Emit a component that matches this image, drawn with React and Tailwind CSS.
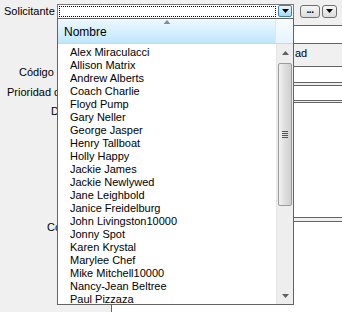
import React from "react";

const names = [
  "Alex Miraculacci",
  "Allison Matrix",
  "Andrew Alberts",
  "Coach Charlie",
  "Floyd Pump",
  "Gary Neller",
  "George Jasper",
  "Henry Tallboat",
  "Holly Happy",
  "Jackie James",
  "Jackie Newlywed",
  "Jane Leighbold",
  "Janice Freidelburg",
  "John Livingston10000",
  "Jonny Spot",
  "Karen Krystal",
  "Marylee Chef",
  "Mike Mitchell10000",
  "Nancy-Jean Beltree",
  "Paul Pizzaza",
];

function Tri({ up = false, color = "#000" }) {
  return (
    <svg width="7" height="4" viewBox="0 0 7 4">
      {up ? (
        <path d="M0 4 L3.5 0 L7 4 Z" fill={color} />
      ) : (
        <path d="M0 0 L7 0 L3.5 4 Z" fill={color} />
      )}
    </svg>
  );
}

export default function App() {
  return (
    <div
      className="relative w-[342px] h-[312px] overflow-hidden bg-[#f0f0f0] text-[11px] leading-[13px] text-black"
      style={{ fontFamily: '"Liberation Sans", Arial, sans-serif' }}
    >
      {/* Top row */}
      <div className="flex items-center h-[21px] pt-[1px]">
        <span className="pl-[4px] w-[57px]">Solicitante</span>
        <div className="flex items-center w-[237px] h-[15px] border border-[#7a7a7a] bg-white p-[1px]">
          <div className="flex-1 h-full border border-dotted border-black" />
          <div className="ml-[2px] w-[14px] h-[12px] flex items-center justify-center border border-[#3c7fb1] rounded-[2px] bg-gradient-to-b from-[#eaf6fd] to-[#a7d9f5]">
            <Tri />
          </div>
        </div>
        <div className="ml-[6px] w-[20px] h-[13px] flex items-center justify-center border border-[#707070] rounded-[3px] bg-gradient-to-b from-[#f6f6f6] to-[#dcdcdc] text-[10px] leading-[6px] font-bold tracking-[-0.5px]">
          <span className="-mt-[3px]">...</span>
        </div>
        <div className="ml-[2px] w-[15px] h-[13px] flex items-center justify-center border border-[#707070] rounded-[3px] bg-gradient-to-b from-[#f6f6f6] to-[#dcdcdc]">
          <Tri />
        </div>
      </div>

      {/* Background form */}
      <div className="flex">
        <div className="w-[111px] shrink-0">
          <div className="w-[57px] overflow-hidden whitespace-nowrap">
            <div className="h-[45px]" />
            <div className="h-[20px] pl-[19px]">Código d</div>
            <div className="h-[19px] pl-[7px]">Prioridad d</div>
            <div className="h-[116px] pl-[51px]">D</div>
            <div className="h-[40px] pl-[47px]">Co</div>
          </div>
        </div>
        <div className="flex-1 flex flex-col">
          <div className="h-[4px]" />
          <div className="h-[18px] bg-white border-t border-[#646464]" />
          <div className="h-[23px] border-t border-[#646464] pl-[184px] pt-[3px]">ad</div>
          <div className="h-[16px] border-t border-[#646464] bg-white" />
          <div className="h-[3px] border-t border-[#646464]" />
          <div className="h-[15px] border-t border-[#646464] bg-white" />
          <div className="h-[2px] border-t border-[#646464]" />
          <div className="h-[115px] border-t border-[#646464] bg-white" />
          <div className="h-[4px] border-t border-[#646464]" />
          <div className="h-[100px] border-t border-l border-[#646464] bg-white" />
        </div>
      </div>

      {/* Dropdown popup */}
      <div className="absolute left-[57px] top-[18px] w-[237px] h-[287px] border border-[#646464] bg-white flex flex-col">
        {/* Header */}
        <div className="flex h-[25px] border-b border-[#d5d5d5]">
          <div className="relative flex-1 flex items-center pl-[6px] pt-[3px] bg-gradient-to-b from-[#eef9ff] to-[#bfe6fb]">
            <span className="absolute left-1/2 top-[1px] -translate-x-1/2">
              <Tri up color="#8a8a8a" />
            </span>
            <span className="text-[12px]">Nombre</span>
          </div>
          <div className="w-[18px] border-l border-[#d5e9f5] bg-gradient-to-b from-[#f7fcff] to-[#e6f4fc]" />
        </div>
        {/* Body */}
        <div className="flex flex-1 min-h-0">
          <div className="flex-1 pt-[2px] pl-[12px] overflow-hidden">
            {names.map((n) => (
              <div key={n} className="h-[13px] whitespace-nowrap">
                {n}
              </div>
            ))}
          </div>
          {/* Scrollbar */}
          <div className="w-[17px] flex flex-col bg-[#eeeeee] border-l border-[#e6e6e6]">
            <div className="h-[17px] flex items-center justify-center">
              <Tri up color="#606060" />
            </div>
            <div className="h-[2px]" />
            <div className="mx-[1px] h-[143px] rounded-[2px] border border-[#9a9a9a] bg-gradient-to-r from-[#f2f2f2] via-[#dedede] to-[#cfcfcf] flex items-center justify-center">
              <div className="flex flex-col gap-[1px]">
                <div className="w-[6px] h-[1px] bg-[#555]" />
                <div className="w-[6px] h-[1px] bg-[#555]" />
                <div className="w-[6px] h-[1px] bg-[#555]" />
                <div className="w-[6px] h-[1px] bg-[#555]" />
              </div>
            </div>
            <div className="flex-1" />
            <div className="h-[17px] flex items-center justify-center">
              <Tri color="#606060" />
            </div>
          </div>
        </div>
      </div>
    </div>
  );
}
